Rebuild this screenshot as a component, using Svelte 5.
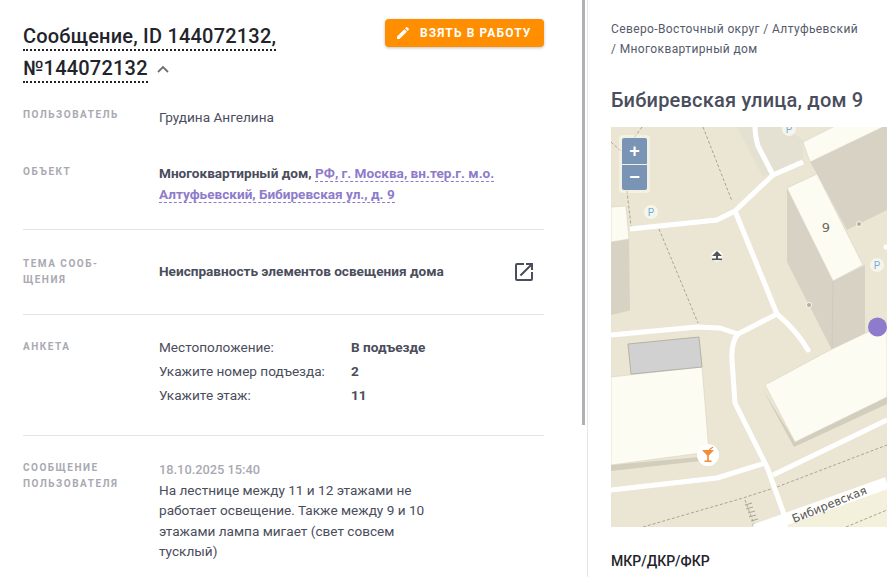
<script>
  const rows = [
    ['Местоположение:', 'В подъезде'],
    ['Укажите номер подъезда:', '2'],
    ['Укажите этаж:', '11']
  ];
  const parking = [[789, 129], [651, 212], [877, 265]];
</script>

<div class="page">
  <section class="left">
    <header class="head">
      <h1 class="title"><span class="dotted">Сообщение, ID 144072132, №144072132</span>
        <svg class="chev" width="14" height="14" viewBox="0 0 14 14"><path d="M2 10l5-5 5 5" fill="none" stroke="#6f6f78" stroke-width="1.8"/></svg>
      </h1>
      <button class="take">
        <svg width="16" height="16" viewBox="0 0 24 24"><path fill="#fff" d="M3 17.25V21h3.75L17.81 9.94l-3.75-3.75L3 17.25zM20.71 7.04a1 1 0 0 0 0-1.41l-2.34-2.34a1 1 0 0 0-1.41 0l-1.83 1.83 3.75 3.75 1.83-1.83z"/></svg>
        <span>ВЗЯТЬ В РАБОТУ</span>
      </button>
    </header>

    <div class="row user">
      <div class="label">ПОЛЬЗОВАТЕЛЬ</div>
      <div class="value">Грудина Ангелина</div>
    </div>

    <div class="row object">
      <div class="label">ОБЪЕКТ</div>
      <div class="value strong">Многоквартирный дом, <span class="link">РФ, г. Москва, вн.тер.г. м.о. Алтуфьевский, Бибиревская ул., д. 9</span></div>
    </div>

    <div class="row topic">
      <div class="label">ТЕМА СООБ-<br />ЩЕНИЯ</div>
      <div class="value strong">Неисправность элементов освещения дома</div>
      <svg class="open" width="24" height="24" viewBox="0 0 24 24"><path fill="#4a4d5c" d="M19 19H5V5h7V3H5a2 2 0 0 0-2 2v14a2 2 0 0 0 2 2h14a2 2 0 0 0 2-2v-7h-2v7zM14 3v2h3.59l-9.83 9.83 1.41 1.41L19 6.41V10h2V3h-7z"/></svg>
    </div>

    <div class="row survey">
      <div class="label">АНКЕТА</div>
      <div class="answers">
        {#each rows as [q, a]}
          <div class="value">{q}</div>
          <div class="value strong">{a}</div>
        {/each}
      </div>
    </div>

    <div class="row message">
      <div class="label">СООБЩЕНИЕ<br />ПОЛЬЗОВАТЕЛЯ</div>
      <div class="body">
        <div class="date">18.10.2025 15:40</div>
        <div class="value text">На лестнице между 11 и 12 этажами не работает освещение. Также между 9 и 10 этажами лампа мигает (свет совсем тусклый)</div>
      </div>
    </div>
    <div class="scrollbar"></div>
  </section>

  <aside class="right">
    <div class="crumbs">Северо-Восточный округ / Алтуфьевский<br />/ Многоквартирный дом</div>
    <h2 class="addr">Бибиревская улица, дом 9</h2>
    <div class="map">
      <svg width="276" height="400" viewBox="611 127 276 400">
        <rect x="611" y="127" width="276" height="400" fill="#ebe6d3" />
        <path d="M737 127L763 177L803 158V140L785 127Z" fill="#e4e1d2" />
        <path d="M762 527L887 484V527Z" fill="#f3f0dc" />
        <g fill="none" stroke="#a8a594" stroke-width="1" stroke-dasharray="3 2">
          <path d="M703 127L732 201" />
          <path d="M642 127L623 153L628 200L631 226" />
          <path d="M611 142L623 153" />
          <path d="M659 229L698 323" />
          <path d="M643 527L743 498L777 487L887 445" />
          <path d="M745 500L755 527" />
          <path d="M846 527L887 510" />
        </g>
        <g stroke="#a8a594" stroke-width="1">
          <path d="M745 505l7-2M746 509l7-2M748 513l7-2M749 517l7-2M751 521l7-2M752 525l7-2" />
        </g>

        <path d="M810 162L887 125V210L847 230L817 174Z" fill="#d7d2c3" />
        <path d="M787 188V262L832 350L865 333V265L833 281Z" fill="#d7d2c3" />
        <path d="M833 281L832 350" stroke="#cfcabb" fill="none" />
        <path d="M611 242L629 239L630 309Q630 311 628 311L611 315Z" fill="#d7d2c3" />
        <path d="M795 442L887 397V404L794 447L763 390Z" fill="#d2cdbc" />
        <path d="M611 465L700 457V461L611 471Z" fill="#d2cdbc" />

        <g fill="#fdfcf3" stroke="#d6d2c2" stroke-width=".6">
          <path d="M803 142L887 100V125L810 162Z" />
          <path d="M787 188L817 174L863 265L833 281Z" />
          <path d="M611 207L626 206L629 239L611 242Z" />
          <path d="M611 377L702 367L709 452L611 465Z" />
          <path d="M765 385L830 350L887 323V397L795 442Z" />
        </g>
        <path d="M628 344L699 337L702 367L631 374Z" fill="#d1d1d1" stroke="#b5b2a6" />

        <g fill="none" stroke="#fff" stroke-linejoin="round" stroke-linecap="butt">
          <path stroke-width="5" d="M611 335L697 327L720 328L738 334L777 314" />
          <path stroke-width="5" stroke-linecap="round" d="M777 314Q797 331 808 350" />
          <path stroke-width="5" d="M738 334Q731 342 732 360L735 403L767 467L785 517V527" />
          <path stroke-width="5" d="M630 229L717 220L735 211L757 190L773 175L803 162" />
          <path stroke-width="5" d="M773 175L758 146Q755 135 755 127" />
          <path stroke-width="5" d="M735 211L777 314" />
          <path stroke-width="5" d="M611 490L717 478L765 463" />
          <path stroke-width="5" d="M773 475L887 420" />
          <path stroke-width="12" d="M755 530L887 483" />
          <path stroke-width="5" stroke-linecap="round" d="M886 247L890 247" />
        </g>

        {#each parking as [x, y]}
          <circle cx={x} cy={y} r="7" fill="#f7f5ea" />
          <text class="p" x={x} y={y + 4}>P</text>
        {/each}

        <text class="num" x="826" y="232">9</text>
        <circle cx="809" cy="305" r="3" fill="#f4f2e6" /><circle cx="809" cy="305" r="2" fill="#b3af9f" />
        <circle cx="859" cy="224" r="3" fill="#f4f2e6" /><circle cx="859" cy="224" r="2" fill="#b3af9f" />

        <g>
          <circle cx="717" cy="256" r="5.5" fill="#fff" />
          <path d="M717 251L722 256H712Z" fill="#55555a" />
          <rect x="716" y="255" width="2" height="4" fill="#55555a" />
          <rect x="712" y="258.5" width="10" height="1.6" fill="#55555a" />
        </g>

        <circle cx="877.500" cy="327" r="9.500" fill="#8e7bcb" />

        <circle cx="708" cy="455" r="11" fill="#fff" />
        <path d="M702 450H714L708 456.500Z M707.200 456H708.800V460.500H707.200Z M704.500 460.500H711.500V462H704.500Z" fill="#f28c38" />
        <path d="M709 450L713 447" stroke="#f28c38" stroke-width="1.200" />

        <text class="street" transform="translate(794 523) rotate(-22)">Бибиревская</text>
      </svg>
      <div class="zoom">
        <button class="zb">+</button>
        <button class="zb">−</button>
      </div>
    </div>
    <h3 class="mkr">МКР/ДКР/ФКР</h3>
  </aside>
</div>

<style>
  :global(body) { margin: 0; background: #fff; }
  .page {
    display: flex;
    width: 887px;
    height: 577px;
    overflow: hidden;
    font-family: Roboto, "Liberation Sans", sans-serif;
    color: #4a4d5c;
  }
  .left {
    position: relative;
    box-sizing: border-box;
    width: 588px;
    flex: none;
    padding: 0 43px 0 23px;
    border-right: 1px solid #e6e6e6;
  }
  .head {
    display: flex;
    justify-content: space-between;
    align-items: flex-start;
    padding-top: 19px;
    height: 87px;
    box-sizing: border-box;
  }
  .title {
    width: 300px;
    margin: 0;
    padding-top: 1px;
    font-size: 20px;
    font-weight: 500;
    line-height: 32px;
    letter-spacing: .2px;
    color: #23242b;
  }
  .dotted { border-bottom: 2px dotted #23242b; padding-bottom: 1px; }
  .chev { margin-left: 3px; vertical-align: -1px; }
  .take {
    display: flex;
    align-items: center;
    gap: 9px;
    width: 159px;
    height: 28px;
    padding: 0 0 0 10px;
    border: 0;
    border-radius: 4px;
    background: #ff8f00;
    box-shadow: 0 1px 3px rgba(0, 0, 0, .25);
    color: #fff;
    font: 700 12px Roboto, sans-serif;
    letter-spacing: 1.1px;
    white-space: nowrap;
  }
  .row {
    display: grid;
    grid-template-columns: 136px 1fr;
    align-items: start;
    align-content: start;
    border-bottom: 1px solid #e4e4e4;
  }
  .user { height: 57px; border-bottom: 0; padding-top: 18px; box-sizing: border-box; }
  .object { height: 86px; padding-top: 19px; box-sizing: border-box; }
  .topic { position: relative; height: 85px; padding-top: 26px; box-sizing: border-box; }
  .survey { height: 121px; padding-top: 20px; box-sizing: border-box; }
  .message { border-bottom: 0; padding-top: 25px; }
  .label {
    font-size: 10px;
    font-weight: 700;
    line-height: 16px;
    letter-spacing: 1.5px;
    color: #a9a9b2;
  }
  .user .label { margin-top: 2px; }
  .object .label { margin-top: 1px; }
  .value { font-size: 13.6px; line-height: 24px; color: #4a4d5c; }
  .strong { font-weight: 700; }
  .object .value { line-height: 21px; width: 345px; }
  .link { color: #8e7bcb; border-bottom: 1px dashed #8e7bcb; }
  .open { position: absolute; right: 8px; top: 30px; }
  .topic .value { padding-top: 3px; }
  .answers {
    display: grid;
    grid-template-columns: 192px 1fr;
    align-content: start;
  }
  .survey .label { margin-top: 4px; }
  .date { font-size: 12.8px; line-height: 20px; font-weight: 500; color: #a9a9b2; }
  .message .label { margin-top: -1px; }
  .body { width: 270px; margin-top: -1px; }
  .text { line-height: 20.300px; }
  .scrollbar {
    position: absolute;
    left: 582px;
    top: 0;
    width: 3px;
    height: 425px;
    background: #b0b0b5;
  }
  .right { padding-left: 23px; flex: 1; min-width: 0; }
  .crumbs {
    margin-top: 19px;
    font-size: 12px;
    line-height: 20px;
    letter-spacing: .38px;
    white-space: nowrap;
    color: #555a6b;
  }
  .addr {
    margin: 29px 0 0;
    font-size: 20px;
    line-height: 24px;
    font-weight: 500;
    letter-spacing: .2px;
    white-space: nowrap;
    color: #4a4d5c;
  }
  .map {
    position: relative;
    width: 276px;
    height: 400px;
    margin-top: 15px;
  }
  .map svg { display: block; }
  .zoom {
    position: absolute;
    left: 8px;
    top: 8px;
    display: flex;
    flex-direction: column;
    gap: 1px;
    padding: 3px;
    border-radius: 4px;
    background: rgba(255, 255, 255, .4);
  }
  .zb {
    width: 25px;
    height: 25.500px;
    padding: 0;
    border: 0;
    background: #7a94b5;
    color: #fff;
    font: 700 18px/1 "Liberation Sans", sans-serif;
  }
  .zb:first-child { border-radius: 2px 2px 0 0; }
  .zb:last-child { border-radius: 0 0 2px 2px; }
  .p { font: 10px Roboto, sans-serif; fill: #6fb0e3; text-anchor: middle; }
  .num { font: 13px "DejaVu Sans", sans-serif; fill: #6b6a60; text-anchor: middle; }
  .street { font: 11.5px "DejaVu Sans", sans-serif; fill: #55554e; letter-spacing: .1px; }
  .mkr {
    margin: 25px 0 0;
    font-size: 14px;
    line-height: 18px;
    font-weight: 500;
    color: #23242b;
  }
</style>
